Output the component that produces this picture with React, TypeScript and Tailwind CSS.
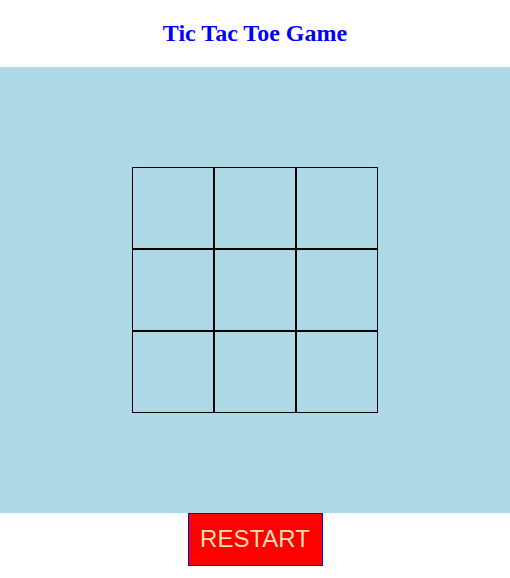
import { useState } from "react";

type Mark = "X" | "O" | null;

export default function App() {
  const [cells, setCells] = useState<Mark[]>(Array(9).fill(null));
  const [turn, setTurn] = useState<"X" | "O">("X");

  function play(i: number) {
    if (cells[i]) return;
    const next = cells.slice();
    next[i] = turn;
    setCells(next);
    setTurn(turn === "X" ? "O" : "X");
  }

  function restart() {
    setCells(Array(9).fill(null));
    setTurn("X");
  }

  return (
    <div className="flex flex-col items-center bg-white font-['Liberation_Serif',serif]">
      <h2 className="my-[19.92px] text-[24px] leading-[27.6px] font-bold text-[#0000ff]">
        Tic Tac Toe Game
      </h2>
      <div className="flex w-full justify-center bg-[#add8e6] py-[100px]">
        <div className="grid grid-cols-[repeat(3,82px)]">
          {cells.map((c, i) => (
            <button
              key={i}
              type="button"
              onClick={() => play(i)}
              className="flex h-[82px] w-[82px] items-center justify-center border border-black text-4xl font-['Liberation_Sans',sans-serif]"
            >
              {c}
            </button>
          ))}
        </div>
      </div>
      <button
        type="button"
        onClick={restart}
        className="h-[53px] w-[135px] border border-[#0000ff] bg-[#ff0000] pb-[2px] text-[24px] leading-[27.6px] text-[#f5deb3] font-['Liberation_Sans',sans-serif]"
      >
        RESTART
      </button>
    </div>
  );
}
